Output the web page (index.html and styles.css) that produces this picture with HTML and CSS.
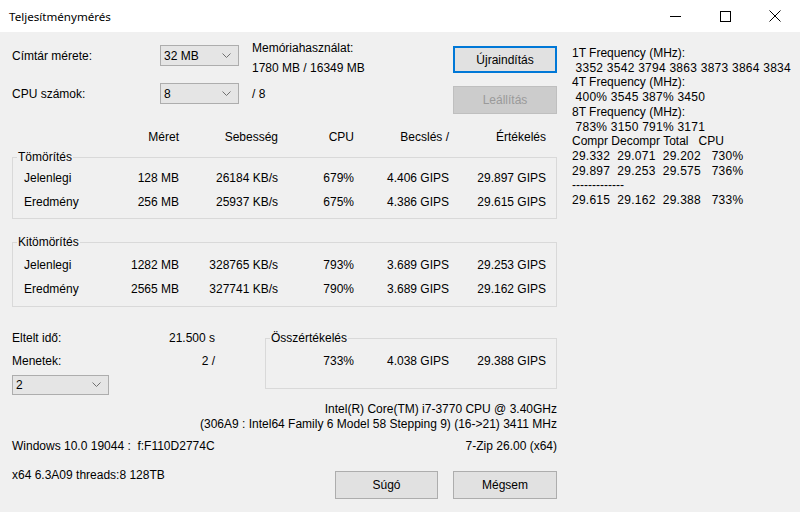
FILE: index.html
```html
<!DOCTYPE html>
<html lang="hu">
<head>
    <meta charset="UTF-8">
    <meta name="viewport" content="width=device-width, initial-scale=1.0">
    <title>Teljesítménymérés</title>
    <link rel="stylesheet" href="styles.css">
</head>
<body>
    <header class="titlebar">
        <span class="title">Teljesítménymérés</span>
        <div class="win-buttons">
            <span class="win-btn"><svg width="11" height="11" viewBox="0 0 11 11"><line x1="0" y1="5.5" x2="11" y2="5.5" stroke="#000" stroke-width="1"/></svg></span>
            <span class="win-btn"><svg width="11" height="11" viewBox="0 0 11 11"><rect x="0.5" y="0.5" width="10" height="10" fill="none" stroke="#000" stroke-width="1"/></svg></span>
            <span class="win-btn"><svg width="12" height="12" viewBox="0 0 12 12"><path d="M0.5 0.5 L11.5 11.5 M11.5 0.5 L0.5 11.5" stroke="#000" stroke-width="1"/></svg></span>
        </div>
    </header>

    <main class="client">
        <div class="left">
            <div class="top">
                <div class="settings">
                    <span class="lbl">Címtár mérete:</span>
                    <div class="combo"><span>32 MB</span><svg width="9" height="5" viewBox="0 0 9 5"><polyline points="0.5,0.5 4.5,4.5 8.5,0.5" fill="none" stroke="#707070" stroke-width="1"/></svg></div>
                    <div class="mem">Memóriahasználat:<br>1780 MB / 16349 MB</div>
                    <span class="lbl">CPU számok:</span>
                    <div class="combo"><span>8</span><svg width="9" height="5" viewBox="0 0 9 5"><polyline points="0.5,0.5 4.5,4.5 8.5,0.5" fill="none" stroke="#707070" stroke-width="1"/></svg></div>
                    <span class="lbl">/ 8</span>
                </div>
                <div class="actions">
                    <button class="btn default">Újraindítás</button>
                    <button class="btn" disabled>Leállítás</button>
                </div>
            </div>

            <div class="cols">
                <span></span>
                <span>Méret</span>
                <span>Sebesség</span>
                <span>CPU</span>
                <span>Becslés /</span>
                <span>Értékelés</span>
            </div>

            <fieldset class="group first">
                <legend>Tömörítés</legend>
                <div class="row">
                    <span>Jelenlegi</span><span>128 MB</span><span>26184 KB/s</span><span>679%</span><span>4.406 GIPS</span><span>29.897 GIPS</span>
                </div>
                <div class="row">
                    <span>Eredmény</span><span>256 MB</span><span>25937 KB/s</span><span>675%</span><span>4.386 GIPS</span><span>29.615 GIPS</span>
                </div>
            </fieldset>

            <fieldset class="group second">
                <legend>Kitömörítés</legend>
                <div class="row">
                    <span>Jelenlegi</span><span>1282 MB</span><span>328765 KB/s</span><span>793%</span><span>3.689 GIPS</span><span>29.253 GIPS</span>
                </div>
                <div class="row">
                    <span>Eredmény</span><span>2565 MB</span><span>327741 KB/s</span><span>790%</span><span>3.689 GIPS</span><span>29.162 GIPS</span>
                </div>
            </fieldset>

            <div class="summary">
                <div class="passes">
                    <div class="pair"><span>Eltelt idő:</span><span>21.500 s</span></div>
                    <div class="pair"><span>Menetek:</span><span>2 /</span></div>
                    <div class="combo small"><span>2</span><svg width="9" height="5" viewBox="0 0 9 5"><polyline points="0.5,0.5 4.5,4.5 8.5,0.5" fill="none" stroke="#707070" stroke-width="1"/></svg></div>
                </div>
                <fieldset class="group total">
                    <legend>Összértékelés</legend>
                    <div class="total-row">
                        <span></span><span>733%</span><span>4.038 GIPS</span><span>29.388 GIPS</span>
                    </div>
                </fieldset>
            </div>

            <div class="cpu">
                <div>Intel(R) Core(TM) i7-3770 CPU @ 3.40GHz</div>
                <div>(306A9 : Intel64 Family 6 Model 58 Stepping 9) (16-&gt;21) 3411 MHz</div>
            </div>

            <div class="sysline">
                <span>Windows 10.0 19044 :  f:F110D2774C</span>
                <span>7-Zip 26.00 (x64)</span>
            </div>

            <div class="footer">
                <span class="arch">x64 6.3A09 threads:8 128TB</span>
                <div class="footer-buttons">
                    <button class="btn">Súgó</button>
                    <button class="btn">Mégsem</button>
                </div>
            </div>
        </div>

        <div class="info">
            <div>1T Frequency (MHz):</div>
            <div class="num"> 3352 3542 3794 3863 3873 3864 3834</div>
            <div>4T Frequency (MHz):</div>
            <div class="num"> 400% 3545 387% 3450</div>
            <div>8T Frequency (MHz):</div>
            <div class="num"> 783% 3150 791% 3171</div>
            <div>Compr Decompr Total   CPU</div>
            <div class="num">29.332  29.071  29.202   730%</div>
            <div class="num">29.897  29.253  29.575   736%</div>
            <div>-------------</div>
            <div class="num">29.615  29.162  29.388   733%</div>
        </div>
    </main>
</body>
</html>
```

FILE: styles.css
```css
body {
    margin: 0;
    width: 800px;
    height: 512px;
    overflow: hidden;
    background: #f0f0f0;
    color: #000;
    font-family: "Liberation Sans", Arial, sans-serif;
    font-size: 12px;
}

/* Title bar */
.titlebar {
    height: 32px;
    background: #fff;
    display: flex;
    align-items: center;
    justify-content: space-between;
}

.title {
    padding-left: 9px;
    font-family: "Noto Sans", sans-serif;
    font-size: 11.6px;
}

.win-buttons {
    display: flex;
    height: 32px;
}

.win-btn {
    width: 50px;
    display: flex;
    align-items: center;
    justify-content: center;
}

/* Client area */
.client {
    display: flex;
}

.left {
    width: 545px;
    padding-left: 12px;
}

.info {
    margin-left: 15px;
    margin-top: 14px;
    line-height: 14.7px;
}

.info div {
    white-space: pre;
}

.info .num {
    letter-spacing: 0.25px;
}

.top {
    display: flex;
    margin-top: 13px;
}

.settings {
    display: grid;
    grid-template-columns: 148px 92px 201px;
    grid-template-rows: 21px 21px;
    row-gap: 17px;
    align-items: center;
}

.mem {
    align-self: start;
    margin-top: -7px;
    line-height: 20px;
}

.combo {
    width: 79px;
    height: 21px;
    box-sizing: border-box;
    border: 1px solid #adadad;
    background: #e5e5e5;
    display: flex;
    align-items: center;
    justify-content: space-between;
    padding: 0 7px 0 3px;
}

.combo.small {
    width: 97px;
    height: 20px;
    margin-top: 6px;
}

.actions {
    display: flex;
    flex-direction: column;
    gap: 13px;
    margin-top: 1px;
}

.btn {
    width: 104px;
    height: 27px;
    box-sizing: border-box;
    border: 1px solid #adadad;
    background: #e1e1e1;
    font-family: "Liberation Sans", Arial, sans-serif;
    font-size: 12px;
    color: #000;
    padding: 0;
}

.btn.default {
    border: 2px solid #0078d7;
}

.btn:disabled {
    height: 28px;
    background: #cccccc;
    border-color: #bfbfbf;
    color: #9a9a9a;
}

/* Results table */
.cols,
.row {
    display: grid;
    grid-template-columns: 87px 79px 99px 76px 95px 97px;
    text-align: right;
}

.cols span:first-child,
.row span:first-child {
    text-align: left;
    padding-left: 11px;
}

.cols {
    margin: 15.5px 0 0 1px;
    line-height: 15px;
}

.row {
    line-height: 24px;
}

.group {
    margin: 0;
    padding: 0;
    border: 1px solid #d9d9d9;
    min-width: 0;
}

.group legend {
    padding: 0 1px;
    margin-left: 4px;
    line-height: 15px;
}

.group.first {
    margin-top: 5px;
    padding: 1px 0 4px;
}

.group.second {
    margin-top: 16px;
    padding: 3px 0 5px;
}

/* Summary */
.summary {
    display: flex;
    margin-top: 24px;
}

.passes {
    width: 203px;
    display: flex;
    flex-direction: column;
}

.pair {
    display: flex;
    justify-content: space-between;
    line-height: 15px;
}

.pair + .pair {
    margin-top: 8px;
}

.group.total {
    margin-left: 50px;
    width: 292px;
    box-sizing: border-box;
    height: 58px;
    padding: 8px 0 0;
}

.total-row {
    display: grid;
    grid-template-columns: 12px 76px 95px 97px;
    text-align: right;
    line-height: 15px;
}

.cpu {
    text-align: right;
    line-height: 15px;
    margin-top: 7px;
}

.sysline {
    display: flex;
    justify-content: space-between;
    line-height: 15px;
    margin-top: 7px;
    white-space: pre;
}

.footer {
    display: flex;
    justify-content: space-between;
    align-items: flex-start;
    margin-top: 14px;
}

.arch {
    line-height: 15px;
}

.footer-buttons {
    display: flex;
    gap: 15px;
    margin-top: 3px;
}

.footer-buttons .btn {
    height: 28px;
    width: 104px;
}

.footer-buttons .btn:first-child {
    width: 103px;
}
```
